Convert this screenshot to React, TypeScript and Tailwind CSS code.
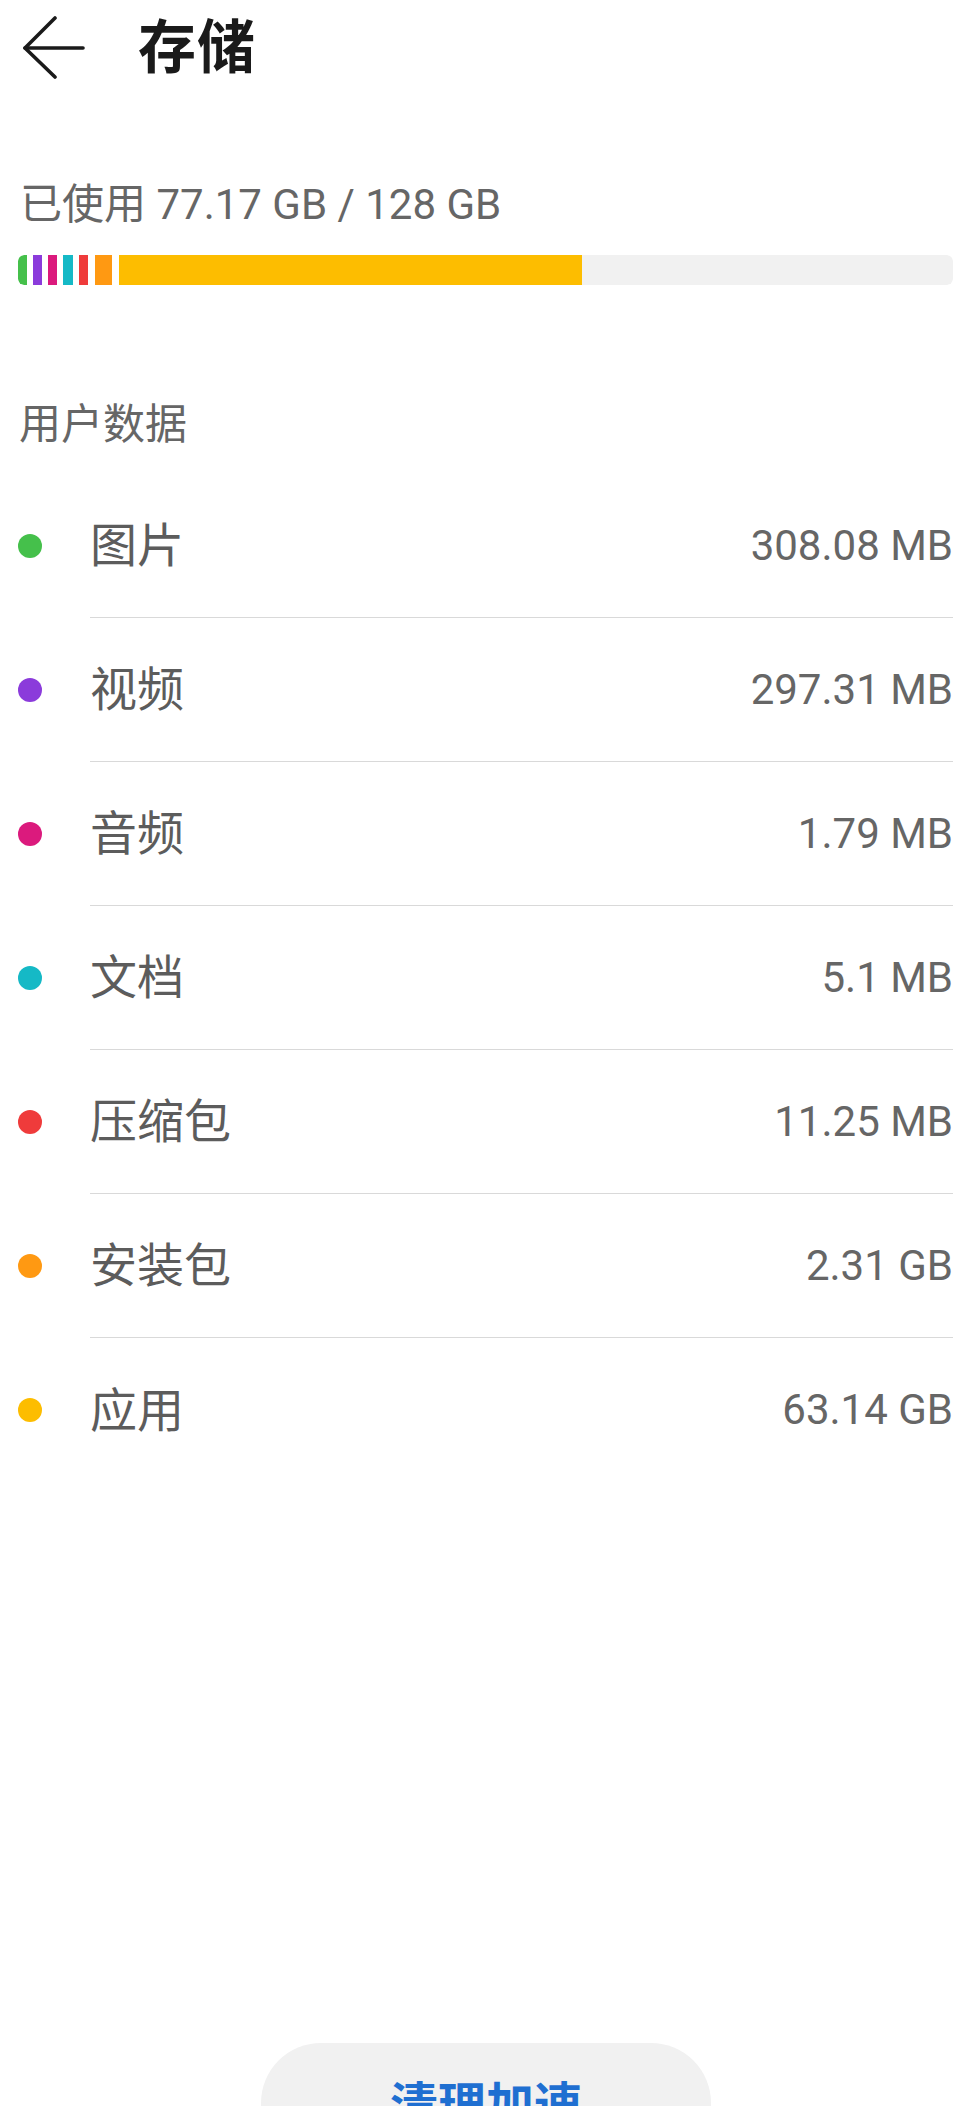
import React from 'react';

const items = [
  { name: '图片', size: '308.08 MB', dot: 'bg-[#45c04b]' },
  { name: '视频', size: '297.31 MB', dot: 'bg-[#8b3bdb]' },
  { name: '音频', size: '1.79 MB', dot: 'bg-[#db1a7d]' },
  { name: '文档', size: '5.1 MB', dot: 'bg-[#15b9c6]' },
  { name: '压缩包', size: '11.25 MB', dot: 'bg-[#ef3b3b]' },
  { name: '安装包', size: '2.31 GB', dot: 'bg-[#ff9912]' },
  { name: '应用', size: '63.14 GB', dot: 'bg-[#fdbd00]' },
];

// usage bar pieces, gaps between them show the white underlay
const segments = [
  'w-[9px] bg-[#45c04b] rounded-l-[6px]',
  'w-[9px] ml-[6px] bg-[#8b3bdb]',
  'w-[9px] ml-[6px] bg-[#db1a7d]',
  'w-[10px] ml-[6px] bg-[#15b9c6]',
  'w-[9px] ml-[6px] bg-[#ef3b3b]',
  'w-[17px] ml-[7px] bg-[#ff9912]',
  'w-[463px] ml-[7px] bg-[#fdbd00]',
];

export default function App() {
  return (
    <div
      className="w-[972px] h-[2106px] overflow-hidden bg-white"
      style={{ fontFamily: 'Roboto, "Noto Sans CJK SC", sans-serif' }}
    >
      {/* Header */}
      <div className="h-[96px] flex items-center pl-[22px]">
        <svg width="64" height="64" viewBox="0 0 64 64" fill="none" stroke="#1a1a1a" strokeWidth="3.6" strokeLinecap="round" strokeLinejoin="round">
          <path d="M3 32 H61" />
          <path d="M33 2 L3 32 L33 61" />
        </svg>
        <h1 className="ml-[52px] text-[58px] font-bold leading-none text-[#1a1a1a] tracking-[1px]">存储</h1>
      </div>

      {/* Usage */}
      <div className="mt-[79px] h-[60px] flex items-center pl-[20px] text-[42px] leading-none text-[#666666]">
        已使用 77.17 GB / 128 GB
      </div>
      <div className="mt-[20px] ml-[18px] mr-[19px] h-[30px] flex bg-white rounded-[6px] overflow-hidden">
        {segments.map((cls, i) => (
          <div key={i} className={`h-full shrink-0 ${cls}`} />
        ))}
        <div className="flex-1 h-full bg-[#f1f1f1] rounded-r-[6px]" />
      </div>

      {/* User data */}
      <div className="mt-[110px] h-[60px] flex items-center pl-[19px] text-[42px] leading-none text-[#666666]">
        用户数据
      </div>
      <div className="mt-[19px]">
        {items.map((item, i) => (
          <div key={item.name} className="h-[144px] flex pl-[18px]">
            <div className={`self-center shrink-0 w-[24px] h-[24px] rounded-full ${item.dot}`} />
            <div
              className={`ml-[48px] mr-[19px] flex-1 flex items-center justify-between ${
                i < items.length - 1 ? 'border-b border-[#d9d9d9]' : ''
              }`}
            >
              <span className="text-[47px] leading-none text-[#5c5c5c]">{item.name}</span>
              <span className="text-[42px] leading-none text-[#666666]">{item.size}</span>
            </div>
          </div>
        ))}
      </div>

      {/* Bottom action */}
      <div className="mt-[561px] flex justify-center">
        <button className="w-[450px] h-[126px] rounded-[60px] bg-[#f1f1f1] flex items-center justify-center text-[48px] font-bold leading-none text-[#1f6fd1]">
          清理加速
        </button>
      </div>
    </div>
  );
}
